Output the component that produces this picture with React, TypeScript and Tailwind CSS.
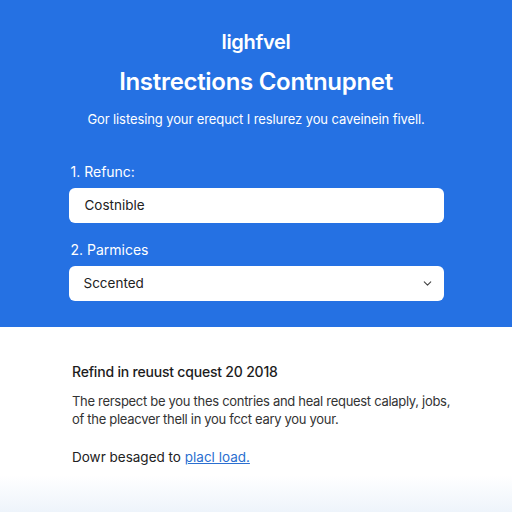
import React from 'react';

const ChevronDown: React.FC = () => (
  <svg width="13" height="13" viewBox="0 0 24 24" fill="none" stroke="currentColor" strokeWidth={2} strokeLinecap="round" strokeLinejoin="round">
    <path d="M6 9l6 6 6-6" />
  </svg>
);

export default function App() {
  return (
    <div className="w-[512px] h-[512px] overflow-hidden bg-white" style={{ fontFamily: 'Inter, "Liberation Sans", sans-serif' }}>
      {/* blue form panel */}
      <div className="bg-[#2571e3] h-[327px] pt-[28px] flex flex-col items-center">
        <h2 className="text-white text-[20px] font-semibold leading-[28px] tracking-[-0.3px]">lighfvel</h2>
        <h1 className="text-white text-[24px] font-semibold leading-[34px] mt-[9px] tracking-[-0.3px]">Instrections Contnupnet</h1>
        <p className="text-white text-[13px] leading-[20px] mt-[10px] tracking-[-0.1px]">Gor listesing your erequct I reslurez you caveinein fivell.</p>

        <div className="w-[375px] mt-[33px] flex flex-col">
          <label className="text-white text-[14px] leading-[20px] pl-[2px]">1. Refunc:</label>
          <div className="mt-[6px] h-[35px] bg-white rounded-md flex items-center px-[16px] text-[13.5px] text-[#222]">Costnible</div>

          <label className="text-white text-[14px] leading-[20px] pl-[2px] mt-[17px]">2. Parmices</label>
          <div className="mt-[6px] h-[35px] bg-white rounded-md flex items-center justify-between pl-[15px] pr-[10px] text-[13.5px] text-[#222]">
            <span>Sccented</span>
            <span className="text-[#444]"><ChevronDown /></span>
          </div>
        </div>
      </div>

      {/* details */}
      <div className="pl-[72px] pr-[56px] pt-[34px] bg-gradient-to-b from-white from-80% to-[#eef4fb] h-[185px]">
        <h3 className="text-[14px] font-medium text-[#1c1c1c] leading-[22px] tracking-[-0.2px]">Refind in reuust cquest 20 2018</h3>
        <p className="mt-[9px] text-[13px] text-[#333] leading-[18px] tracking-[-0.3px]">
          The rerspect be you thes contries and heal request calaply, jobs, of the pleacver thell in you fcct eary you your.
        </p>
        <p className="mt-[19px] text-[13.5px] text-[#222] leading-[20px]">
          Dowr besaged to <a className="text-[#2b6fd0] underline">placl load.</a>
        </p>
      </div>
    </div>
  );
}
